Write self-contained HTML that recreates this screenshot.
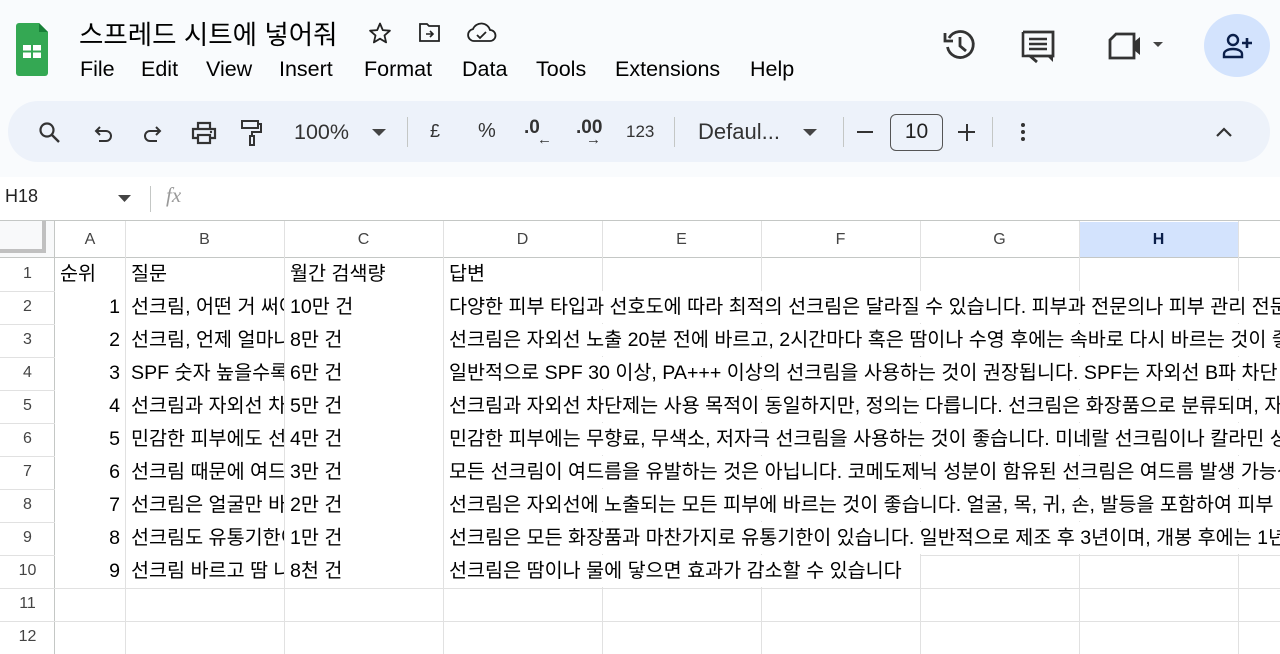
<!DOCTYPE html>
<html><head><meta charset="utf-8"><style>
*{margin:0;padding:0;box-sizing:border-box}
body{width:1280px;height:654px;overflow:hidden;background:#f9fbfd;font-family:"Liberation Sans","Noto Sans CJK KR",sans-serif;color:#1f1f1f;position:relative}
.a{position:absolute;white-space:nowrap}
.tb{position:absolute;left:8px;top:101px;width:1262px;height:61px;background:#edf2fa;border-radius:30px}
.ic{position:absolute}
.sep{position:absolute;top:117px;width:1px;height:30px;background:#c4c7c5}
.grid{position:absolute;left:0;top:177px;width:1280px;height:477px;background:#fff}
.vl{position:absolute;width:1px;background:#e1e1e1}
.hl{position:absolute;height:1px;background:#e1e1e1;left:0;width:1280px}
.c{position:absolute;height:32px;line-height:32px;font-size:19.6px;color:#000;white-space:nowrap;overflow:hidden;background:#fff;padding-left:5px}
.rh{position:absolute;left:0;width:55px;height:32px;line-height:32px;font-size:16px;color:#444;text-align:center}
.ch{position:absolute;top:222px;height:36px;line-height:36px;font-size:16px;color:#444;text-align:center}
</style></head><body>
<svg class="ic" style="left:16px;top:23px" width="32" height="55" viewBox="0 0 32 55"><path d="M3 0h20l9 9v41a3 3 0 0 1-3 3H3a3 3 0 0 1-3-3V3a3 3 0 0 1 3-3z" fill="#34a853"/><path d="M23 0l9 9h-9z" fill="#188038"/><rect x="7" y="22" width="18" height="13" fill="#fff"/><rect x="15" y="22" width="2" height="13" fill="#34a853"/><rect x="7" y="27.5" width="18" height="2" fill="#34a853"/></svg>
<div class="a" style="left:79px;top:13px;font-size:26.5px;color:#000">스프레드 시트에 넣어줘</div>
<svg class="ic" style="left:368px;top:21px" width="24" height="24" viewBox="0 0 24 24"><path d="M12 2.5l2.8 6.6 7.1.6-5.4 4.7 1.6 7-6.1-3.7-6.1 3.7 1.6-7L2.1 9.7l7.1-.6z" fill="none" stroke="#222" stroke-width="1.8" stroke-linejoin="round"/></svg>
<svg class="ic" style="left:418px;top:22px" width="24" height="22" viewBox="0 0 24 22"><path d="M2 2h7l2 2h10v15H2z" fill="none" stroke="#222" stroke-width="1.8"/><path d="M8 12h7M12 9l3 3-3 3" fill="none" stroke="#222" stroke-width="1.6"/></svg>
<svg class="ic" style="left:466px;top:22px" width="32" height="22" viewBox="0 0 32 22"><path d="M8 19a6 6 0 0 1-1-11.9A9 9 0 0 1 24 8a5.5 5.5 0 0 1 0 11z" fill="none" stroke="#222" stroke-width="1.8"/><path d="M11 13l3 3 6-6" fill="none" stroke="#222" stroke-width="1.8"/></svg>
<div class="a" style="top:57px;font-size:21.5px;color:#000;left:80px">File</div>
<div class="a" style="top:57px;font-size:21.5px;color:#000;left:141px">Edit</div>
<div class="a" style="top:57px;font-size:21.5px;color:#000;left:206px">View</div>
<div class="a" style="top:57px;font-size:21.5px;color:#000;left:279px">Insert</div>
<div class="a" style="top:57px;font-size:21.5px;color:#000;left:364px">Format</div>
<div class="a" style="top:57px;font-size:21.5px;color:#000;left:462px">Data</div>
<div class="a" style="top:57px;font-size:21.5px;color:#000;left:536px">Tools</div>
<div class="a" style="top:57px;font-size:21.5px;color:#000;left:615px">Extensions</div>
<div class="a" style="top:57px;font-size:21.5px;color:#000;left:750px">Help</div>
<svg class="ic" style="left:943px;top:28px" width="34" height="34" viewBox="0 0 34 34"><path d="M6 10A13 13 0 1 1 4.5 19" fill="none" stroke="#333" stroke-width="2.8"/><path d="M2 5v8h8" fill="none" stroke="#333" stroke-width="2.8"/><path d="M17 9v9l6 5" fill="none" stroke="#333" stroke-width="2.8"/></svg>
<svg class="ic" style="left:1021px;top:30px" width="34" height="34" viewBox="0 0 34 34"><path d="M2 2h30v24H9l7 6" fill="none" stroke="#333" stroke-width="2.8"/><path d="M2 2v24h7M8 9h18M8 14h18M8 19h18" fill="none" stroke="#333" stroke-width="2.6"/><path d="M26 26h6v6z" fill="#333"/></svg>
<svg class="ic" style="left:1108px;top:32px" width="62" height="28" viewBox="0 0 62 28"><path d="M8 2h18v24H2V8z" fill="none" stroke="#333" stroke-width="2.8"/><path d="M26 10l6-5v18l-6-5z" fill="#333"/><path d="M45 10h10l-5 5z" fill="#444"/></svg>
<div class="a" style="left:1204px;top:14px;width:66px;height:63px;border-radius:50%;background:#d3e3fd"></div>
<svg class="ic" style="left:1222px;top:33px" width="32" height="26" viewBox="0 0 32 26"><circle cx="11" cy="7" r="5" fill="none" stroke="#0b1f4a" stroke-width="2.4"/><path d="M2 24v-3c0-3 4-5 9-5s9 2 9 5v3z" fill="none" stroke="#0b1f4a" stroke-width="2.4"/><path d="M25 5v10M20 10h10" stroke="#0b1f4a" stroke-width="2.6"/></svg>
<div class="tb"></div>
<svg class="ic" style="left:38px;top:121px" width="24" height="24" viewBox="0 0 24 24"><circle cx="9" cy="9" r="6.5" fill="none" stroke="#333" stroke-width="2.2"/><path d="M14 14l7 7" stroke="#333" stroke-width="2.4"/></svg>
<svg class="ic" style="left:92px;top:123px" width="22" height="22" viewBox="0 0 22 22"><path d="M4 8h10a5 5 0 0 1 0 10H7" fill="none" stroke="#333" stroke-width="2"/><path d="M8 4L4 8l4 4" fill="none" stroke="#333" stroke-width="2"/></svg>
<svg class="ic" style="left:142px;top:123px" width="22" height="22" viewBox="0 0 22 22"><path d="M18 8H8a5 5 0 0 0 0 10h7" fill="none" stroke="#333" stroke-width="2"/><path d="M14 4l4 4-4 4" fill="none" stroke="#333" stroke-width="2"/></svg>
<svg class="ic" style="left:191px;top:121px" width="26" height="24" viewBox="0 0 26 24"><path d="M7 7V2h12v5M7 17H2V8h22v9h-5" fill="none" stroke="#333" stroke-width="2.2"/><rect x="7" y="14" width="12" height="8" fill="none" stroke="#333" stroke-width="2.2"/><circle cx="20" cy="11" r="1.2" fill="#333"/></svg>
<svg class="ic" style="left:240px;top:119px" width="24" height="28" viewBox="0 0 24 28"><rect x="2" y="2" width="16" height="7" fill="none" stroke="#333" stroke-width="2"/><path d="M18 5h3v8h-9v4" fill="none" stroke="#333" stroke-width="2"/><rect x="10" y="17" width="4" height="9" fill="none" stroke="#333" stroke-width="2"/></svg>
<div class="a" style="left:294px;top:120px;font-size:21.5px;color:#333">100%</div>
<svg class="ic" style="left:372px;top:129px" width="14" height="8"><path d="M0 0h14L7 7z" fill="#444"/></svg>
<div class="sep" style="left:407px"></div>
<div class="a" style="left:430px;top:121px;font-size:18px;color:#333">£</div>
<div class="a" style="left:478px;top:120px;font-size:20px;color:#333">%</div>
<div class="a" style="left:524px;top:117px;font-size:19px;color:#333;font-weight:bold">.0</div>
<div class="a" style="left:537px;top:131px;font-size:15px;color:#333">←</div>
<div class="a" style="left:576px;top:117px;font-size:19px;color:#333;font-weight:bold">.00</div>
<div class="a" style="left:586px;top:131px;font-size:15px;color:#333">→</div>
<div class="a" style="left:626px;top:122px;font-size:17px;color:#333">123</div>
<div class="sep" style="left:674px"></div>
<div class="a" style="left:698px;top:119px;font-size:22px;color:#333">Defaul...</div>
<svg class="ic" style="left:803px;top:129px" width="14" height="8"><path d="M0 0h14L7 7z" fill="#444"/></svg>
<div class="sep" style="left:843px"></div>
<div class="a" style="left:857px;top:131px;width:16px;height:2px;background:#333"></div>
<div class="a" style="left:890px;top:114px;width:53px;height:37px;border:1.5px solid #555;border-radius:6px;font-size:21px;line-height:34px;text-align:center;color:#222">10</div>
<div class="a" style="left:958px;top:131px;width:17px;height:2.2px;background:#333"></div>
<div class="a" style="left:965.5px;top:123.5px;width:2.2px;height:17px;background:#333"></div>
<div class="sep" style="left:992px"></div>
<div class="a" style="left:1021px;top:123px;width:4px;height:4px;border-radius:2px;background:#333;box-shadow:0 7px 0 #333,0 14px 0 #333"></div>
<svg class="ic" style="left:1215px;top:127px" width="18" height="11"><path d="M2 9l7-7 7 7" fill="none" stroke="#333" stroke-width="2.2"/></svg>
<div class="grid"></div>
<div class="a" style="left:5px;top:186px;font-size:18px;color:#222">H18</div>
<svg class="ic" style="left:118px;top:195px" width="13" height="7"><path d="M0 0h13L6.5 7z" fill="#444"/></svg>
<div class="a" style="left:150px;top:186px;width:1px;height:26px;background:#c4c7c5"></div>
<div class="a" style="left:166px;top:183px;font-size:21px;color:#999;font-style:italic;font-family:'Liberation Serif',serif">fx</div>
<div class="a" style="left:0;top:220px;width:1280px;height:1px;background:#c4c7c5"></div>
<div class="a" style="left:0;top:221px;width:55px;height:37px;background:#f8f9fa"></div>
<div class="a" style="left:0;top:221px;width:46px;height:32px;background:#f8f9fa;border-right:4px solid #c0c0c0;border-bottom:4px solid #c0c0c0"></div>
<div class="a" style="left:1079px;top:222px;width:159px;height:36px;background:#d3e3fd"></div>
<div class="a" style="left:0;top:257px;width:1280px;height:1px;background:#c4c7c5"></div>
<div class="a" style="left:54px;top:221px;width:1px;height:433px;background:#c4c7c5"></div>
<div class="vl" style="left:125px;top:221px;height:433px"></div>
<div class="vl" style="left:284px;top:221px;height:433px"></div>
<div class="vl" style="left:443px;top:221px;height:433px"></div>
<div class="vl" style="left:602px;top:221px;height:433px"></div>
<div class="vl" style="left:761px;top:221px;height:433px"></div>
<div class="vl" style="left:920px;top:221px;height:433px"></div>
<div class="vl" style="left:1079px;top:221px;height:433px"></div>
<div class="vl" style="left:1238px;top:221px;height:433px"></div>
<div class="ch" style="left:55px;width:70px">A</div>
<div class="ch" style="left:125px;width:159px">B</div>
<div class="ch" style="left:284px;width:159px">C</div>
<div class="ch" style="left:443px;width:159px">D</div>
<div class="ch" style="left:602px;width:159px">E</div>
<div class="ch" style="left:761px;width:159px">F</div>
<div class="ch" style="left:920px;width:159px">G</div>
<div class="ch" style="left:1079px;width:159px;color:#0b1f4a;font-weight:bold">H</div>
<div class="hl" style="top:291px"></div><div class="hl" style="top:324px"></div><div class="hl" style="top:357px"></div><div class="hl" style="top:390px"></div><div class="hl" style="top:423px"></div><div class="hl" style="top:456px"></div><div class="hl" style="top:489px"></div><div class="hl" style="top:522px"></div><div class="hl" style="top:555px"></div><div class="hl" style="top:588px"></div><div class="hl" style="top:621px"></div>
<div class="rh" style="top:258px">1</div><div class="rh" style="top:291px">2</div><div class="rh" style="top:324px">3</div><div class="rh" style="top:357px">4</div><div class="rh" style="top:390px">5</div><div class="rh" style="top:423px">6</div><div class="rh" style="top:456px">7</div><div class="rh" style="top:489px">8</div><div class="rh" style="top:522px">9</div><div class="rh" style="top:555px">10</div><div class="rh" style="top:588px">11</div><div class="rh" style="top:621px">12</div>
<div class="c" style="left:55px;top:258px;width:70px">순위</div>
<div class="c" style="left:126px;top:258px;width:158px">질문</div>
<div class="c" style="left:285px;top:258px;width:158px">월간 검색량</div>
<div class="c" style="left:444px;top:258px;width:158px">답변</div>
<div class="c" style="left:55px;top:291px;width:70px;text-align:right;padding-right:5px">1</div>
<div class="c" style="left:126px;top:291px;width:158px">선크림, 어떤 거 써야 하나요?</div>
<div class="c" style="left:285px;top:291px;width:158px">10만 건</div>
<div class="c" style="left:444px;top:291px;width:836px">다양한 피부 타입과 선호도에 따라 최적의 선크림은 달라질 수 있습니다. 피부과 전문의나 피부 관리 전문가와 상담하세요.</div>
<div class="c" style="left:55px;top:324px;width:70px;text-align:right;padding-right:5px">2</div>
<div class="c" style="left:126px;top:324px;width:158px">선크림, 언제 얼마나 발라야 하나요?</div>
<div class="c" style="left:285px;top:324px;width:158px">8만 건</div>
<div class="c" style="left:444px;top:324px;width:836px">선크림은 자외선 노출 20분 전에 바르고, 2시간마다 혹은 땀이나 수영 후에는 속바로 다시 바르는 것이 좋습니다.</div>
<div class="c" style="left:55px;top:357px;width:70px;text-align:right;padding-right:5px">3</div>
<div class="c" style="left:126px;top:357px;width:158px">SPF 숫자 높을수록 좋은가요?</div>
<div class="c" style="left:285px;top:357px;width:158px">6만 건</div>
<div class="c" style="left:444px;top:357px;width:836px">일반적으로 SPF 30 이상, PA+++ 이상의 선크림을 사용하는 것이 권장됩니다. SPF는 자외선 B파 차단 지수입니다.</div>
<div class="c" style="left:55px;top:390px;width:70px;text-align:right;padding-right:5px">4</div>
<div class="c" style="left:126px;top:390px;width:158px">선크림과 자외선 차단제 차이는?</div>
<div class="c" style="left:285px;top:390px;width:158px">5만 건</div>
<div class="c" style="left:444px;top:390px;width:836px">선크림과 자외선 차단제는 사용 목적이 동일하지만, 정의는 다릅니다. 선크림은 화장품으로 분류되며, 자외선</div>
<div class="c" style="left:55px;top:423px;width:70px;text-align:right;padding-right:5px">5</div>
<div class="c" style="left:126px;top:423px;width:158px">민감한 피부에도 선크림을?</div>
<div class="c" style="left:285px;top:423px;width:158px">4만 건</div>
<div class="c" style="left:444px;top:423px;width:836px">민감한 피부에는 무향료, 무색소, 저자극 선크림을 사용하는 것이 좋습니다. 미네랄 선크림이나 칼라민 성분</div>
<div class="c" style="left:55px;top:456px;width:70px;text-align:right;padding-right:5px">6</div>
<div class="c" style="left:126px;top:456px;width:158px">선크림 때문에 여드름이?</div>
<div class="c" style="left:285px;top:456px;width:158px">3만 건</div>
<div class="c" style="left:444px;top:456px;width:836px">모든 선크림이 여드름을 유발하는 것은 아닙니다. 코메도제닉 성분이 함유된 선크림은 여드름 발생 가능성이</div>
<div class="c" style="left:55px;top:489px;width:70px;text-align:right;padding-right:5px">7</div>
<div class="c" style="left:126px;top:489px;width:158px">선크림은 얼굴만 바르나요?</div>
<div class="c" style="left:285px;top:489px;width:158px">2만 건</div>
<div class="c" style="left:444px;top:489px;width:836px">선크림은 자외선에 노출되는 모든 피부에 바르는 것이 좋습니다. 얼굴, 목, 귀, 손, 발등을 포함하여 피부 전체</div>
<div class="c" style="left:55px;top:522px;width:70px;text-align:right;padding-right:5px">8</div>
<div class="c" style="left:126px;top:522px;width:158px">선크림도 유통기한이 있나요?</div>
<div class="c" style="left:285px;top:522px;width:158px">1만 건</div>
<div class="c" style="left:444px;top:522px;width:836px">선크림은 모든 화장품과 마찬가지로 유통기한이 있습니다. 일반적으로 제조 후 3년이며, 개봉 후에는 1년</div>
<div class="c" style="left:55px;top:555px;width:70px;text-align:right;padding-right:5px">9</div>
<div class="c" style="left:126px;top:555px;width:158px">선크림 바르고 땀 나면?</div>
<div class="c" style="left:285px;top:555px;width:158px">8천 건</div>
<div class="c" style="left:444px;top:555px;width:476px">선크림은 땀이나 물에 닿으면 효과가 감소할 수 있습니다</div>
</body></html>
